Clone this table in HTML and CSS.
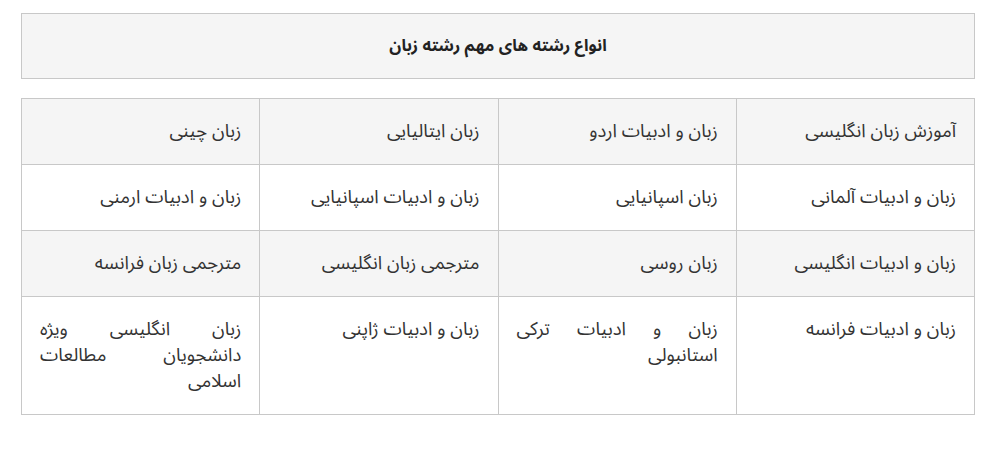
FILE: index.html
```html
<!DOCTYPE html>
<html lang="fa" dir="rtl">
<head>
<meta charset="utf-8">
<link rel="stylesheet" href="styles.css">
</head>
<body>
<div class="page">
  <div class="title-box"><h2 class="title">انواع رشته های مهم رشته زبان</h2></div>
  <table class="fields">
    <tr class="odd">
      <td>آموزش زبان انگلیسی</td>
      <td>زبان و ادبیات اردو</td>
      <td>زبان ایتالیایی</td>
      <td>زبان چینی</td>
    </tr>
    <tr>
      <td>زبان و ادبیات آلمانی</td>
      <td>زبان اسپانیایی</td>
      <td>زبان و ادبیات اسپانیایی</td>
      <td>زبان و ادبیات ارمنی</td>
    </tr>
    <tr class="odd">
      <td>زبان و ادبیات انگلیسی</td>
      <td>زبان روسی</td>
      <td>مترجمی زبان انگلیسی</td>
      <td>مترجمی زبان فرانسه</td>
    </tr>
    <tr>
      <td>زبان و ادبیات فرانسه</td>
      <td>زبان و ادبیات ترکی استانبولی</td>
      <td>زبان و ادبیات ژاپنی</td>
      <td>زبان انگلیسی ویژه دانشجویان مطالعات اسلامی</td>
    </tr>
  </table>
</div>
</body>
</html>
```
FILE: styles.css
```css
html, body {
  margin: 0;
  padding: 0;
  background: #fff;
}
body {
  font-family: "Noto Sans Arabic", "Noto Sans", "DejaVu Sans", sans-serif;
  color: #333;
  font-size: 18.5px;
}
.page {
  padding: 13px 25px 0 21px;
  width: 954px;
}
.title-box {
  background: #f5f5f5;
  border: 1px solid #c8c8c8;
  height: 64px;
  display: flex;
  align-items: center;
  justify-content: center;
}
.title {
  margin: 0;
  font-size: 16.5px;
  font-weight: bold;
  color: #222;
  line-height: 26px;
}
.fields {
  margin-top: 19px;
  width: 954px;
  border-collapse: collapse;
  table-layout: fixed;
}
.fields td {
  border: 1px solid #c8c8c8;
  padding: 20px 18px 19px;
  line-height: 26px;
  vertical-align: top;
  text-align: justify;
  text-align-last: right;
}
.fields tr.odd td {
  background: #f5f5f5;
}
```
